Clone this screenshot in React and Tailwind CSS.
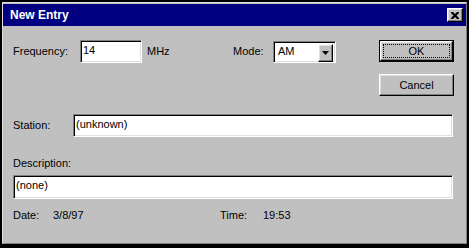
import React from "react";

const font = { fontFamily: '"Liberation Sans", Arial, sans-serif' };

const sunken =
	"border border-t-[#808080] border-l-[#808080] border-b-white border-r-white shadow-[inset_1px_1px_0_#000,inset_-1px_-1px_0_#dfdfdf] bg-white";
const raised =
	"border border-t-white border-l-white border-b-black border-r-black shadow-[inset_-1px_-1px_0_#808080,inset_1px_1px_0_#dfdfdf] bg-[#c0c0c0]";

const Field = ({ value, className }) => (
	<div className={`${sunken} ${className} pl-[2px] pt-[2px] text-[11px] leading-[14px] text-black`}>
		{value}
	</div>
);

const CloseIcon = () => (
	<svg width="8" height="7" viewBox="0 0 8 7">
		<path d="M0 0h2l2 2 2-2h2v1L5.5 3.5 8 6v1H6L4 5 2 7H0V6l2.5-2.5L0 1z" fill="#000" />
	</svg>
);

const App = () => {
	return (
		<div className="w-[469px] h-[248px] bg-black pt-[2px] pl-[2px]" style={font}>
			<div className="w-[465px] h-[242px] bg-[#c0c0c0] border border-t-[#dfdfdf] border-l-[#dfdfdf] border-b-[#808080] border-r-[#808080] pt-[1px] flex flex-col">
				{/* title bar */}
				<div className="h-[22px] bg-[#000080] flex items-center justify-between pl-[7px] pr-[3px]">
					<span className="text-white font-bold text-[12px] leading-none">New Entry</span>
					<button className={`${raised} w-[16px] h-[14px] flex items-center justify-center p-0`}>
						<CloseIcon />
					</button>
				</div>

				<div className="flex flex-col pl-[10px] text-[11px] text-black">
					{/* top row */}
					<div className="flex items-start mt-[14px]">
						<div className="flex items-center h-[23px]">
							<span className="w-[67px]">Frequency:</span>
							<Field value="14" className="w-[62px] h-[23px]" />
							<span className="ml-[5px] w-[86px]">MHz</span>
							<span className="w-[40px]">Mode:</span>
							<div className={`${sunken} w-[63px] h-[22px] flex items-start p-[2px]`}>
								<span className="flex-1 pl-[2px] leading-[14px]">AM</span>
								<div className={`${raised} w-[15px] h-[18px] flex items-center justify-center`}>
									<svg width="7" height="4" viewBox="0 0 7 4">
										<path d="M0 0h7L3.5 4z" fill="#000" />
									</svg>
								</div>
							</div>
						</div>
						<div className="flex flex-col ml-[43px] gap-[12px]">
							<div className="w-[75px] h-[22px] border border-black">
								<div className={`${raised} w-full h-full p-[2px]`}>
									<div className="w-full h-full border border-dotted border-black flex items-center justify-center">
										OK
									</div>
								</div>
							</div>
							<div className={`${raised} w-[75px] h-[22px] flex items-center justify-center`}>
								Cancel
							</div>
						</div>
					</div>

					{/* station */}
					<div className="flex items-center mt-[18px]">
						<span className="w-[60px]">Station:</span>
						<Field value="(unknown)" className="w-[380px] h-[23px]" />
					</div>

					{/* description */}
					<span className="mt-[19px] leading-[14px]">Description:</span>
					<Field value="(none)" className="w-[440px] h-[24px] mt-[5px]" />

					{/* date / time */}
					<div className="flex items-center mt-[9px] h-[14px]">
						<span className="w-[40px]">Date:</span>
						<span className="w-[167px]">3/8/97</span>
						<span className="w-[43px]">Time:</span>
						<span>19:53</span>
					</div>
				</div>
			</div>
		</div>
	);
};

export default App;
